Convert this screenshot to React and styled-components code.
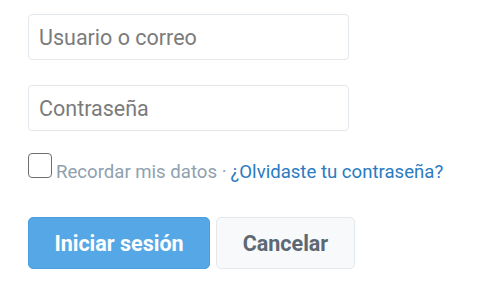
import React, { useState } from 'react';
import styled, { createGlobalStyle } from 'styled-components';

const GlobalStyle = createGlobalStyle`
  * { box-sizing: border-box; }
  body {
    margin: 0;
    background: #fff;
    font-family: Roboto, "Liberation Sans", Arial, sans-serif;
  }
`;

const Form = styled.form`
  display: flex;
  flex-direction: column;
  align-items: flex-start;
  padding: 14px 0 0 28px;
`;

const Field = styled.input`
  width: 321px;
  height: 46px;
  margin-bottom: ${(p) => p.$gap || 0}px;
  padding: 0 10px;
  border: 1px solid #e3e8ec;
  border-radius: 4px;
  font-family: inherit;
  font-size: 21.5px;
  color: #333;
  outline: none;
  &::placeholder {
    color: #7b7b7b;
  }
`;

const Options = styled.div`
  display: flex;
  align-items: baseline;
  gap: 4px;
  margin-top: 22px;
  font-size: 18.6px;
  color: #8fa0ae;
`;

const Check = styled.input`
  appearance: none;
  width: 24px;
  height: 25px;
  margin: 0;
  border: 1.5px solid #6f6f6f;
  border-radius: 4px;
  background: #fff;
  cursor: pointer;
  &:checked {
    background: #55a7e6;
    border-color: #55a7e6;
  }
`;

const Forgot = styled.a`
  color: #2a7bbf;
  text-decoration: none;
`;

const Actions = styled.div`
  display: flex;
  gap: 6px;
  margin-top: 34px;
`;

const Button = styled.button`
  height: 52px;
  width: ${(p) => p.$w}px;
  border-radius: 5px;
  font-family: inherit;
  font-size: 21.5px;
  font-weight: 700;
  cursor: pointer;
  color: ${(p) => (p.$primary ? '#fff' : '#5c6873')};
  background: ${(p) => (p.$primary ? '#55a7e6' : '#f7f9fa')};
  border: 1px solid ${(p) => (p.$primary ? '#4b9ee0' : '#e3e8ec')};
`;

export default function App() {
  const [remember, setRemember] = useState(false);

  return (
    <>
      <GlobalStyle />
      <Form onSubmit={(e) => e.preventDefault()}>
        <Field placeholder="Usuario o correo" $gap={25} />
        <Field type="password" placeholder="Contraseña" />
        <Options>
          <Check
            type="checkbox"
            checked={remember}
            onChange={(e) => setRemember(e.target.checked)}
          />
          <span>Recordar mis datos ·</span>
          <Forgot href="#">¿Olvidaste tu contraseña?</Forgot>
        </Options>
        <Actions>
          <Button type="submit" $primary $w={182}>Iniciar sesión</Button>
          <Button type="button" $w={139}>Cancelar</Button>
        </Actions>
      </Form>
    </>
  );
}
